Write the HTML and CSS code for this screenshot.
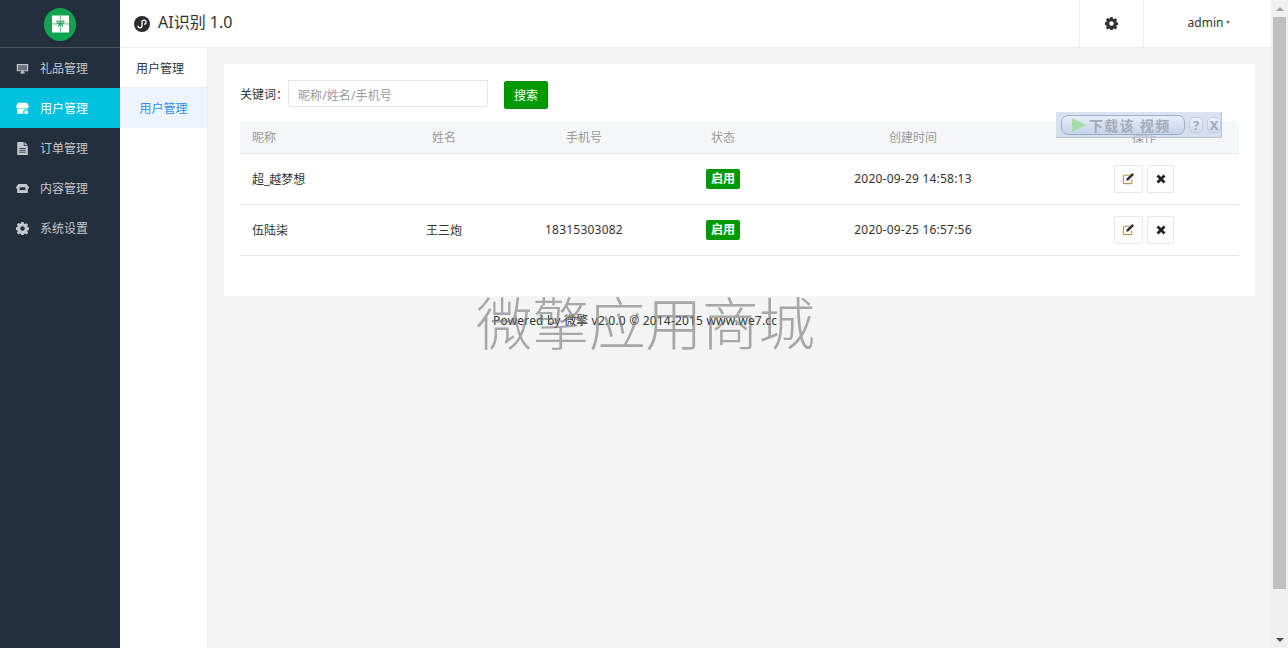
FILE: index.html
```html
<!DOCTYPE html>
<html lang="zh-CN">
<head>
    <meta charset="UTF-8">
    <title>用户管理</title>
    <link rel="stylesheet" href="styles.css">
</head>
<body>
    <svg class="icon-defs" width="0" height="0">
        <defs>
            <path id="cog" d="M6.600 0h2.800l.4 2 1.300.6 1.800-1.100 2 2-1.100 1.800.6 1.300 2 .4v2.800l-2 .4-.6 1.300 1.100 1.800-2 2-1.800-1.100-1.300.6-.4 2H6.600l-.4-2-1.300-.6-1.800 1.100-2-2 1.100-1.800-.6-1.300-2-.4V6.600l2-.4.6-1.300-1.100-1.800 2-2 1.800 1.100 1.300-.6zM8 5.200a2.800 2.800 0 1 0 0 5.600 2.800 2.800 0 0 0 0-5.600z" fill-rule="evenodd"/>
            <path id="store" d="M2.500 1h11L16 5.500a2 2 0 0 1-2 1.800H2a2 2 0 0 1-2-1.800zM1.500 8h13v6.500h-13z"/>
        </defs>
    </svg>

    <div class="page">
        <aside class="sidebar">
            <div class="logo">
                <span class="logo-circle">
                    <svg viewBox="0 0 20 20" width="17" height="18">
                        <rect x="0" y="0" width="20" height="20" fill="#fff"/>
                        <path d="M0 9h20v1.500H0zM9.200 0h1.500v20H9.200z" fill="#7ccb96"/>
                        <path d="M10 9C8 5 5.500 6 6 8s2 1.500 4 1c2 .5 3.500 1 4-1s-2-3-4 1zM9.500 10l-2.500 3M10.500 10l2.500 3" fill="none" stroke="#2fa65e" stroke-width="1.400"/>
                    </svg>
                </span>
            </div>
            <nav class="menu">
                <a class="menu-item">
                    <svg class="menu-icon" viewBox="0 0 16 16"><path d="M1 2.500h14v9H9.500v1.500H11v1H5v-1h1.500v-1.500H1zM2.500 4v6h11V4z" fill-rule="evenodd"/><path d="M2.500 4h11v6h-11z" opacity=".45"/></svg>
                    礼品管理
                </a>
                <a class="menu-item active">
                    <svg class="menu-icon" viewBox="0 0 16 16"><use href="#store"/><circle cx="12.500" cy="12.500" r="3.500" fill="#00c1de"/><circle cx="12.500" cy="12.500" r="2.300"/></svg>
                    用户管理
                </a>
                <a class="menu-item">
                    <svg class="menu-icon" viewBox="0 0 16 16"><path d="M1.500 0h8v5h5v11h-13zM10.500 0l4 4h-4z"/><path d="M4 8h8M4 10.300h8M4 12.600h8" stroke="#232f3c" stroke-width="1"/></svg>
                    订单管理
                </a>
                <a class="menu-item">
                    <svg class="menu-icon" viewBox="0 0 16 16"><path d="M3 2.500h10l3 4v1.500h-1.500v5.500h-13V8H0V6.500z"/><path d="M4.500 6.500h7v3.500h-7z" fill="#232f3c"/></svg>
                    内容管理
                </a>
                <a class="menu-item">
                    <svg class="menu-icon" viewBox="0 0 16 16"><use href="#cog"/></svg>
                    系统设置
                </a>
            </nav>
        </aside>

        <div class="main">
            <header class="topbar">
                <div class="app-title">
                    <svg class="app-icon" viewBox="0 0 16 16" width="16" height="16">
                        <circle cx="8" cy="8" r="8" fill="#2b2b2b"/>
                        <path d="M4 9.800a2 2 0 1 0 4 0V6.200a2 2 0 1 1 2 2M12 6.200" fill="none" stroke="#fff" stroke-width="1.300"/>
                    </svg>
                    <span class="app-name">AI识别 1.0</span>
                </div>
                <div class="topbar-right">
                    <div class="topbar-cell settings">
                        <svg viewBox="0 0 16 16" width="13" height="13"><use href="#cog"/></svg>
                    </div>
                    <div class="topbar-cell user"><span class="user-name">admin</span><span class="caret"></span></div>
                </div>
            </header>

            <div class="body-wrap">
                <nav class="subnav">
                    <div class="subnav-title">用户管理</div>
                    <a class="subnav-item">用户管理</a>
                </nav>

                <main class="content">
                    <section class="card">
                        <form class="search">
                            <label for="keyword">关键词：</label>
                            <input id="keyword" type="text" placeholder="昵称/姓名/手机号">
                            <button type="button">搜索</button>
                        </form>
                        <table class="user-table">
                            <colgroup>
                                <col class="col-nick">
                                <col class="col-name">
                                <col class="col-phone">
                                <col class="col-status">
                                <col class="col-time">
                                <col class="col-action">
                            </colgroup>
                            <thead>
                                <tr>
                                    <th>昵称</th>
                                    <th>姓名</th>
                                    <th>手机号</th>
                                    <th>状态</th>
                                    <th>创建时间</th>
                                    <th>操作</th>
                                </tr>
                            </thead>
                            <tbody>
                                <tr>
                                    <td>超_越梦想</td>
                                    <td></td>
                                    <td class="num"></td>
                                    <td><span class="badge">启用</span></td>
                                    <td class="num">2020-09-29 14:58:13</td>
                                    <td>
                                        <div class="actions">
                                            <a class="btn-icon edit"><svg viewBox="0 0 14 14" width="13" height="13"><path d="M10.500 8v3.500a1 1 0 0 1-1 1h-7a1 1 0 0 1-1-1v-7a1 1 0 0 1 1-1H8" fill="none" stroke="#c09050" stroke-width="1.200"/><path d="M5 7l6-6 2 2-6 6-2.500.5z" fill="#333"/></svg></a>
                                            <a class="btn-icon"><svg viewBox="0 0 10 10" width="10" height="10"><path d="M1.500 1.500l7 7M8.500 1.500l-7 7" stroke="#222" stroke-width="2.800"/></svg></a>
                                        </div>
                                    </td>
                                </tr>
                                <tr>
                                    <td>伍陆柒</td>
                                    <td>王三炮</td>
                                    <td class="num">18315303082</td>
                                    <td><span class="badge">启用</span></td>
                                    <td class="num">2020-09-25 16:57:56</td>
                                    <td>
                                        <div class="actions">
                                            <a class="btn-icon edit"><svg viewBox="0 0 14 14" width="13" height="13"><path d="M10.500 8v3.500a1 1 0 0 1-1 1h-7a1 1 0 0 1-1-1v-7a1 1 0 0 1 1-1H8" fill="none" stroke="#c09050" stroke-width="1.200"/><path d="M5 7l6-6 2 2-6 6-2.500.5z" fill="#333"/></svg></a>
                                            <a class="btn-icon"><svg viewBox="0 0 10 10" width="10" height="10"><path d="M1.500 1.500l7 7M8.500 1.500l-7 7" stroke="#222" stroke-width="2.800"/></svg></a>
                                        </div>
                                    </td>
                                </tr>
                            </tbody>
                        </table>
                    </section>
                    <footer class="footer">Powered by 微擎 v2.0.0 © 2014-2015 www.we7.cc</footer>
                </main>
            </div>
        </div>

        <div class="scrollbar">
            <span class="arrow up"></span>
            <div class="thumb-track"><div class="thumb"></div></div>
            <span class="arrow down"></span>
        </div>
    </div>

    <!-- things that sit over the page -->
    <div class="watermark">微擎应用商城</div>
    <div class="video-bar">
        <div class="video-pill"><span class="play"></span>下载该 视频</div>
        <span class="video-btn">?</span>
        <span class="video-btn">X</span>
    </div>
</body>
</html>
```

FILE: styles.css
```css
* {
    box-sizing: border-box;
}
html, body {
    margin: 0;
    padding: 0;
    height: 100%;
    overflow: hidden;
}
body {
    font-family: "Noto Sans", "Noto Sans CJK SC", sans-serif;
    font-size: 12px;
    color: #333;
    background-color: #f4f4f4;
}
.icon-defs {
    position: absolute;
}
.page {
    display: flex;
    height: 648px;
}

/* left menu */
.sidebar {
    width: 120px;
    flex: none;
    background-color: #232f3c;
}
.logo {
    height: 48px;
    display: flex;
    align-items: center;
    justify-content: center;
    border-bottom: 1px solid #4a545f;
}
.logo-circle {
    width: 32px;
    height: 33px;
    margin-top: 3px;
    margin-bottom: 2px;
    border-radius: 50%;
    background-color: #10a452;
    display: flex;
    align-items: center;
    justify-content: center;
}
.menu-item {
    height: 40px;
    display: flex;
    align-items: center;
    padding-left: 16px;
    color: #c3c8cd;
    font-size: 12px;
}
.menu-item.active {
    background-color: #00c1de;
    color: #fff;
}
.menu-icon {
    width: 13px;
    height: 13px;
    margin-right: 11px;
    fill: currentColor;
}

/* top bar */
.main {
    flex: 1;
    min-width: 0;
    display: flex;
    flex-direction: column;
}
.topbar {
    height: 48px;
    flex: none;
    display: flex;
    justify-content: space-between;
    background: #fff;
    border-bottom: 1px solid #eee;
}
.app-title {
    display: flex;
    align-items: center;
    gap: 8px;
    padding-left: 14px;
    font-size: 16px;
    color: #333;
}
.app-name {
    padding-bottom: 5px;
}
.topbar-right {
    display: flex;
}
.topbar-cell {
    display: flex;
    align-items: center;
    justify-content: center;
    border-left: 1px solid #eee;
}
.settings {
    width: 64px;
    fill: #333;
}
.user {
    width: 128px;
    padding-left: 3px;
}
.user-name {
    padding-bottom: 3px;
}
.caret {
    margin-left: 3px;
    margin-bottom: 3px;
    border-top: 3px solid #666;
    border-left: 2.500px solid transparent;
    border-right: 2.500px solid transparent;
}

/* second column */
.body-wrap {
    flex: 1;
    display: flex;
    min-height: 0;
}
.subnav {
    width: 88px;
    flex: none;
    background: #fff;
    border-right: 1px solid #eee;
}
.subnav-title {
    height: 40px;
    line-height: 41px;
    padding-left: 16px;
    border-bottom: 1px solid #eee;
}
.subnav-item {
    display: block;
    height: 40px;
    line-height: 41px;
    text-align: center;
    color: #2e8ded;
    background-color: #edf4fe;
}

/* content */
.content {
    flex: 1;
    min-width: 0;
    padding: 16px 16px 0;
}
.card {
    height: 232px;
    background: #fff;
    padding: 16px;
}
.search {
    display: flex;
    align-items: center;
    height: 27px;
}
.search label {
    width: 48px;
    flex: none;
    margin-top: 1px;
}
.search input {
    width: 200px;
    height: 27px;
    padding: 3px 9px 0;
    border: 1px solid #e7e7eb;
    font-family: inherit;
    font-size: 12px;
    letter-spacing: .1px;
    outline: none;
}
.search input::placeholder {
    color: #999;
}
.search button {
    width: 44px;
    height: 28px;
    margin-left: 16px;
    margin-top: 2px;
    border: 1px solid #0a8a0a;
    border-radius: 2px;
    background-color: #090;
    color: #fff;
    font-family: inherit;
    font-size: 12px;
    padding: 0;
}
.user-table {
    width: 999px;
    margin-top: 14px;
    border-collapse: collapse;
    table-layout: fixed;
}
.col-nick { width: 149px; }
.col-name { width: 110px; }
.col-phone { width: 170px; }
.col-status { width: 108px; }
.col-time { width: 272px; }
.col-action { width: 190px; }
.user-table th {
    height: 32px;
    font-weight: normal;
    color: #999;
    background-color: #f5f6f8;
    border-bottom: 1px solid #e7e7eb;
}
.user-table td {
    height: 51px;
    text-align: center;
    border-bottom: 1px solid #e7e7eb;
}
.user-table td.num {
    letter-spacing: .22px;
}
.user-table th:first-child,
.user-table td:first-child {
    text-align: left;
    padding-left: 12px;
}
.badge {
    display: inline-block;
    padding: 0 3px;
    height: 20px;
    line-height: 20px;
    width: 34px;
    border-radius: 2px;
    background-color: #090;
    color: #fff;
    font-weight: bold;
}
.actions {
    display: flex;
    justify-content: center;
    gap: 4px;
}
.btn-icon {
    width: 27px;
    height: 28px;
    display: flex;
    align-items: center;
    justify-content: center;
    border: 1px solid #e7e7eb;
    border-radius: 2px;
}
.btn-icon.edit {
    width: 29px;
}
.footer {
    margin-top: 16px;
    padding-left: 269px;
    line-height: 18px;
    color: #333;
    letter-spacing: .19px;
}

/* fake window scrollbar */
.scrollbar {
    width: 17px;
    flex: none;
    display: flex;
    flex-direction: column;
    align-items: center;
    background-color: #f0f0f0;
}
.arrow {
    height: 17px;
    flex: none;
    display: flex;
    align-items: center;
}
.arrow::before {
    content: "";
    border-left: 4px solid transparent;
    border-right: 4px solid transparent;
}
.arrow.up::before {
    border-bottom: 4px solid #a3a3a3;
}
.arrow.down::before {
    border-top: 4px solid #505050;
}
.thumb-track {
    flex: 1;
    width: 100%;
}
.thumb {
    height: 572px;
    margin: 0 2px;
    background-color: #bfbfbf;
}

/* overlays */
.watermark {
    position: absolute;
    left: 476px;
    top: 284px;
    font-size: 56.500px;
    line-height: 80px;
    white-space: nowrap;
    color: rgba(120, 120, 120, 0.62);
    font-weight: 300;
}
.video-bar {
    position: absolute;
    left: 1056px;
    top: 112px;
    width: 166px;
    height: 26px;
    display: flex;
    align-items: center;
    gap: 4px;
    padding-left: 5px;
    background-color: rgba(195, 208, 232, 0.62);
    border-right: 1px solid #b9c3d6;
    border-bottom: 1px solid #b9c3d6;
}
.video-pill {
    width: 125px;
    height: 20px;
    display: flex;
    align-items: center;
    gap: 3px;
    padding-left: 10px;
    border: 1px solid #9fb0cc;
    border-radius: 7px;
    background: linear-gradient(#e8edf8, #c5d2ea);
    color: #a3aaba;
    font-size: 14px;
    font-weight: bold;
    letter-spacing: 1.300px;
    white-space: nowrap;
}
.play {
    border-left: 14px solid #a6dca6;
    border-top: 7px solid transparent;
    border-bottom: 7px solid transparent;
}
.video-btn {
    width: 14px;
    height: 16px;
    line-height: 15px;
    text-align: center;
    border: 1px solid #c3cde0;
    border-radius: 5px;
    background: linear-gradient(#eef1f8, #cfd9ec);
    color: #a3aaba;
    font-size: 13px;
    font-weight: bold;
}
```
